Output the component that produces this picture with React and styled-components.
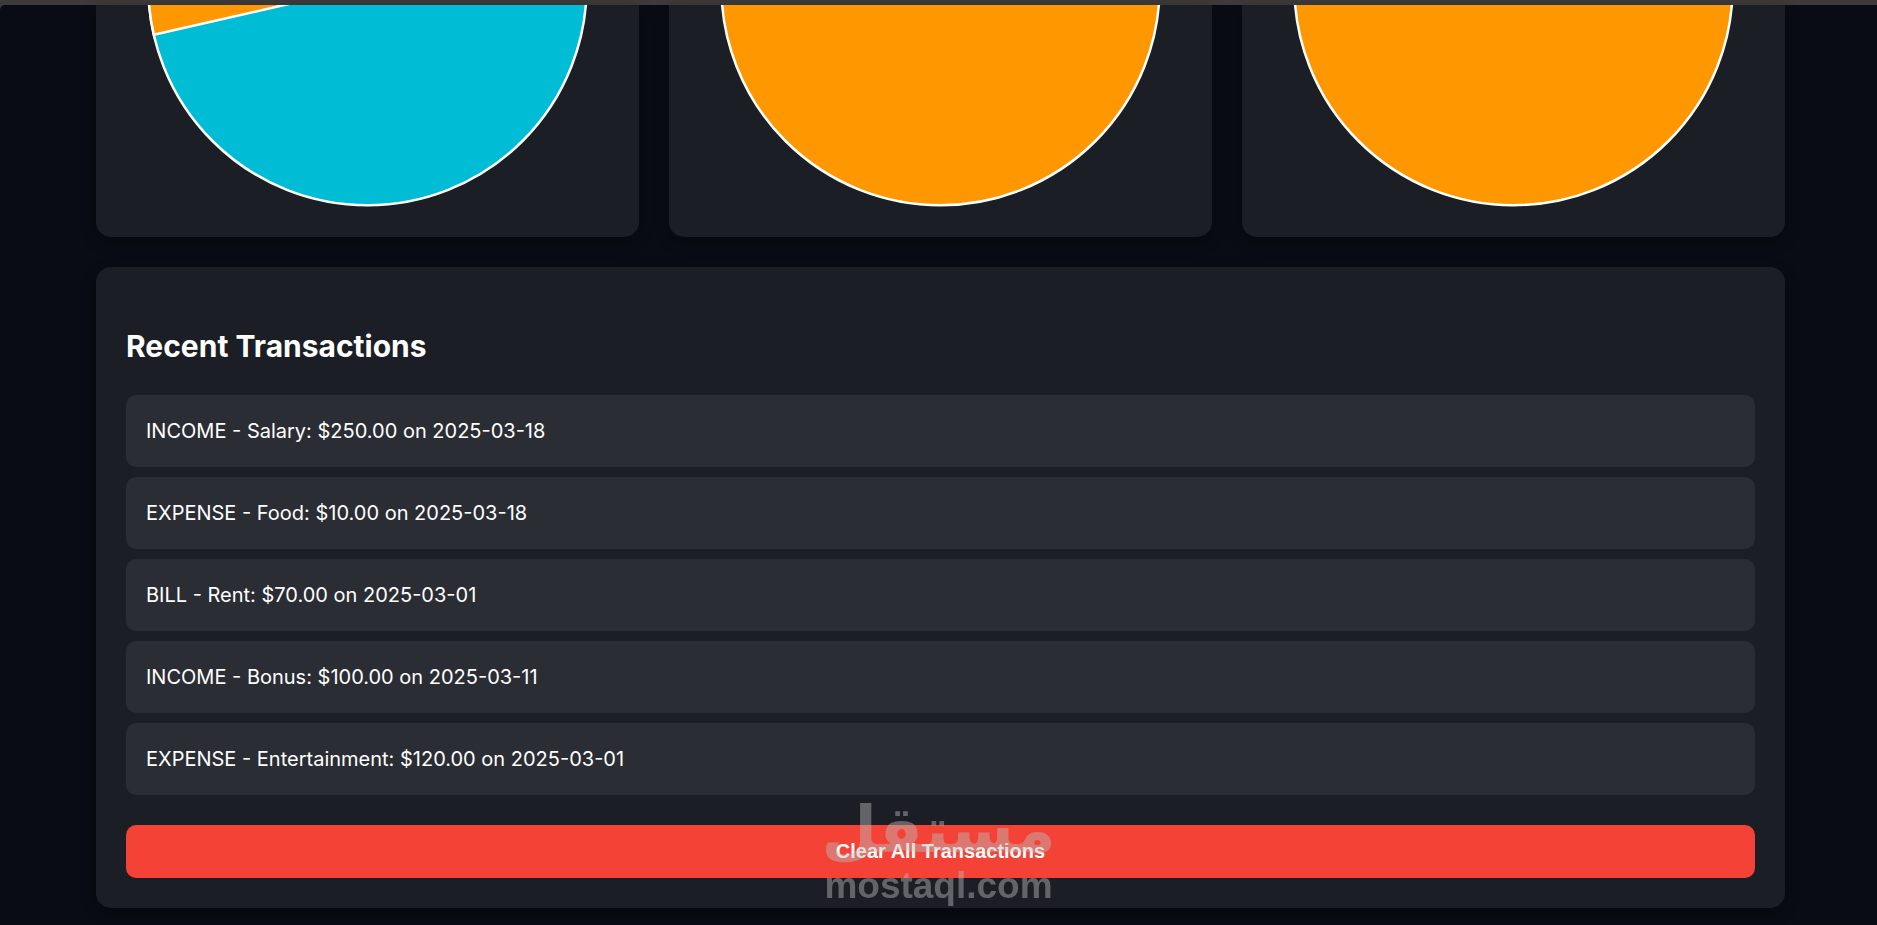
import {useState} from "react";
import styled, {createGlobalStyle} from "styled-components";

const GlobalStyle = createGlobalStyle`
  * {
    box-sizing: border-box;
  }
  body {
    margin: 0;
    background-color: #3d3a3a;
    color: #fff;
    font-family: Inter, "Liberation Sans", sans-serif;
    font-size: 20px;
    line-height: 32px;
  }
`;

const Page = styled.div`
  margin-top: 5px;
  min-height: calc(100vh - 5px);
  padding: 0 92px 17px 96px;
  border-top-left-radius: 5px;
  background-color: #090c14;
`;
const Charts = styled.section`
  display: grid;
  grid-template-columns: repeat(3, 1fr);
  gap: 30px;
  margin-bottom: 30px;
`;
const Card = styled.div`
  background-color: #1b1e25;
  border-radius: 15px;
  padding: 30px;
  box-shadow: 0 5px 15px rgba(0, 0, 0, 0.3);
`;
const ChartCard = styled(Card)`
  display: flex;
  justify-content: center;
  padding-top: 0;
  border-top-left-radius: 0;
  border-top-right-radius: 0;
`;
const Chart = styled.svg`
  display: block;
  width: 100%;
  max-width: 442px;
`;
const Title = styled.h2`
  margin: 25px 0;
  font-size: 30px;
  line-height: 48px;
  font-weight: 700;
`;
const List = styled.ul`
  display: flex;
  flex-direction: column;
  gap: 10px;
  margin: 0;
  padding: 0;
  list-style: none;
`;
const Item = styled.li`
  padding: 20px;
  border-radius: 10px;
  background-color: #2a2d34;
`;
const ClearButton = styled.button`
  display: block;
  width: 100%;
  margin-top: 30px;
  padding: 15px;
  border: none;
  border-radius: 10px;
  background-color: #f44336;
  color: #fff;
  font-family: "Liberation Sans", Arial, sans-serif;
  font-size: 20px;
  line-height: 23px;
  font-weight: 700;
  cursor: pointer;
`;
//floats over the page, bottom center
const Watermark = styled.div`
  position: fixed;
  left: 0;
  right: 0;
  bottom: 17px;
  display: flex;
  flex-direction: column;
  align-items: center;
  color: #bbb;
  opacity: 0.45;
  font-weight: 700;
  pointer-events: none;
`;
const WatermarkArabic = styled.span`
  font-family: "DejaVu Sans", sans-serif;
  font-size: 64px;
  line-height: 68px;
`;
const WatermarkLatin = styled.span`
  font-family: "Liberation Sans", Arial, sans-serif;
  font-size: 37px;
  line-height: 44px;
`;

const charts = [
  {id: "income", color: "#00bcd4", rest: "#ff9800"},
  {id: "expense", color: "#ff9800"},
  {id: "bill", color: "#ff9800"},
];

const initialTransactions = [
  {id: 1, type: "INCOME", name: "Salary", amount: 250, date: "2025-03-18"},
  {id: 2, type: "EXPENSE", name: "Food", amount: 10, date: "2025-03-18"},
  {id: 3, type: "BILL", name: "Rent", amount: 70, date: "2025-03-01"},
  {id: 4, type: "INCOME", name: "Bonus", amount: 100, date: "2025-03-11"},
  {id: 5, type: "EXPENSE", name: "Entertainment", amount: 120, date: "2025-03-01"},
];

const Pie = ({color, rest}) => (
  <Chart viewBox="0 0 442 202" aria-hidden="true">
    <circle cx="220.5" cy="-19" r="219.2" fill={color} stroke="#fff" strokeWidth="2.5" />
    {/* second slice, 100 of 350 */}
    {rest && (
      <path
        d="M220.5 -19 L6.8 29.8 A219.2 219.2 0 0 1 220.5 -238.2 Z"
        fill={rest}
        stroke="#fff"
        strokeWidth="2.5"
        strokeLinejoin="round"
      />
    )}
  </Chart>
);

const App = () => {
  const [transactions, setTransactions] = useState(initialTransactions);

  return (
    <>
      <GlobalStyle />
      <Page>
        <Charts>
          {charts.map((chart) => (
            <ChartCard key={chart.id}>
              <Pie color={chart.color} rest={chart.rest} />
            </ChartCard>
          ))}
        </Charts>
        <Card as="section">
          <Title>Recent Transactions</Title>
          <List>
            {transactions.map((t) => (
              <Item key={t.id}>
                {`${t.type} - ${t.name}: $${t.amount.toFixed(2)} on ${t.date}`}
              </Item>
            ))}
          </List>
          <ClearButton type="button" onClick={() => setTransactions([])}>
            Clear All Transactions
          </ClearButton>
        </Card>
      </Page>
      <Watermark>
        <WatermarkArabic lang="ar">مستقل</WatermarkArabic>
        <WatermarkLatin>mostaql.com</WatermarkLatin>
      </Watermark>
    </>
  );
};

export default App;
